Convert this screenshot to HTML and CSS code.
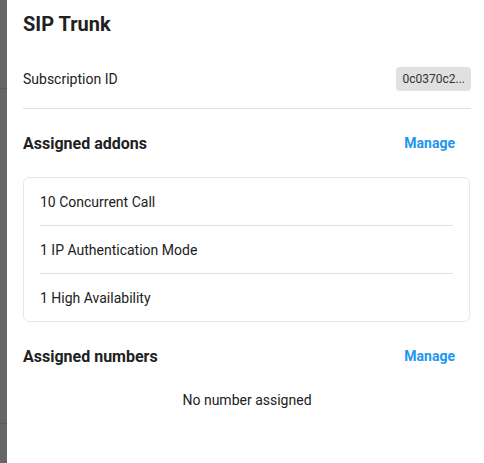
FILE: index.html
```html
<!DOCTYPE html>
<html>
<head>
  <meta charset="utf-8">
  <title>SIP Trunk</title>
  <link rel="stylesheet" href="styles.css">
</head>
<body>
  <div class="backdrop"></div>

  <div class="panel">
    <h1>SIP Trunk</h1>

    <div class="sub-row">
      <span>Subscription ID</span>
      <span class="chip">0c0370c2...</span>
    </div>

    <hr class="divider">

    <div class="section-head">
      <h2>Assigned addons</h2>
      <button class="manage">Manage</button>
    </div>

    <ul class="card">
      <li>10 Concurrent Call</li>
      <li>1 IP Authentication Mode</li>
      <li>1 High Availability</li>
    </ul>

    <div class="section-head">
      <h2>Assigned numbers</h2>
      <button class="manage">Manage</button>
    </div>

    <p class="empty">No number assigned</p>
  </div>
</body>
</html>
```

FILE: styles.css
```css
html, body {
  margin: 0;
  height: 100%;
}
body {
  display: flex;
  font-family: Roboto, "Liberation Sans", sans-serif;
  color: #212121;
  background-color: #fff;
}
.backdrop {
  width: 7px;
  flex-shrink: 0;
  background-color: #666;
  background-image:
    linear-gradient(#595959, #595959),
    linear-gradient(#595959, #595959);
  background-size: 100% 1px, 100% 1px;
  background-position: 0 88px, 0 423px;
  background-repeat: no-repeat;
}
.panel {
  flex: 1;
  padding: 10px 13px 0 16px;
}
h1 {
  margin: 0 0 21px;
  font-size: 20px;
  line-height: 28px;
  font-weight: 700;
}
.sub-row {
  height: 40px;
  display: flex;
  align-items: center;
  justify-content: space-between;
  font-size: 14px;
}
.chip {
  background-color: #e0e0e0;
  border-radius: 4px;
  padding: 0 6px;
  height: 24px;
  line-height: 24px;
  font-size: 12px;
  color: #333;
}
.divider {
  margin: 9px 0 0;
  border: none;
  border-top: 1px solid #e0e0e0;
}
.section-head {
  margin-top: 16px;
  height: 36px;
  display: flex;
  align-items: center;
  justify-content: space-between;
}
h2 {
  margin: 0;
  font-size: 16px;
  font-weight: 700;
}
.manage {
  border: none;
  background: none;
  padding: 0 16px;
  height: 36px;
  font-family: inherit;
  font-size: 14px;
  font-weight: 700;
  color: #1e96f0;
  cursor: pointer;
}
.card {
  list-style: none;
  margin: 16px 1px 0 0;
  padding: 0 16px;
  border: 1px solid #e8e8e8;
  border-radius: 6px;
}
.card li {
  height: 47px;
  display: flex;
  align-items: center;
  font-size: 14px;
  border-top: 1px solid #e0e0e0;
}
.card li:first-child {
  border-top: none;
}
.empty {
  margin: 16px 0 0;
  text-align: center;
  font-size: 14px;
  line-height: 20px;
}
```
